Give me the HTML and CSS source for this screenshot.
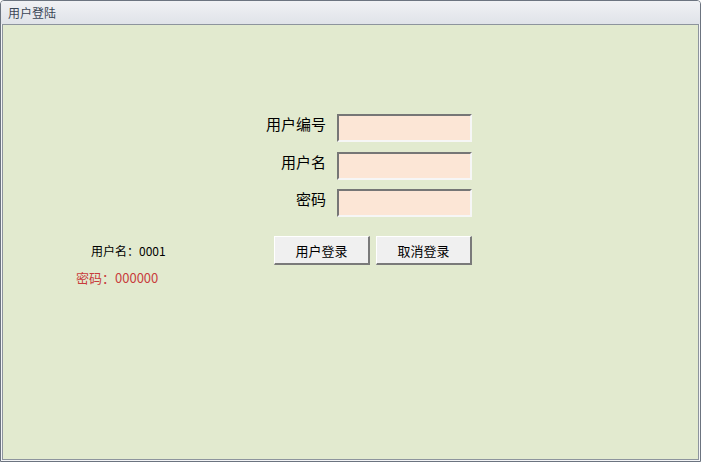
FILE: index.html
```html
<!DOCTYPE html>
<html lang="zh-CN">
<head>
    <meta charset="UTF-8">
    <title>用户登陆</title>
    <link rel="stylesheet" href="styles.css">
</head>
<body>
<div class="window">
    <div class="titlebar">用户登陆</div>
    <div class="frame">
        <div class="content">
            <div class="loginform">
                <label class="lbl">用户编号</label>
                <input class="txt" type="text">
                <label class="lbl">用户名</label>
                <input class="txt" type="text">
                <label class="lbl">密码</label>
                <input class="txt" type="password">
                <div class="hint">
                    <div class="hint-user">用户名：0001</div>
                    <div class="hint-pwd">密码：000000</div>
                </div>
                <div class="btns">
                    <button class="btn">用户登录</button>
                    <button class="btn">取消登录</button>
                </div>
            </div>
        </div>
    </div>
</div>
</body>
</html>
```

FILE: styles.css
```css
*{
    padding: 0;
    margin: 0;
    box-sizing: border-box;
}
body{
    font-family: "Noto Sans CJK SC", "Liberation Sans", sans-serif;
    background: #fff;
}
.window{
    width: 701px;
    height: 462px;
    border: 1px solid #6c7480;
    border-radius: 4px 4px 0 0;
    display: flex;
    flex-direction: column;
    overflow: hidden;
}
.titlebar{
    height: 23px;
    line-height: 23px;
    padding-left: 7px;
    font-size: 12px;
    color: #3a4656;
    background: linear-gradient(#f0f1f4, #e0e3e9);
}
.frame{
    flex: 1;
    display: flex;
    padding: 0 1px 1px 1px;
    background: #f3f4f6;
}
.content{
    flex: 1;
    border: 1px solid #8d949d;
    background: #e2eacf;
    padding-top: 89px;
}
.loginform{
    display: grid;
    grid-template-columns: 253px 81px 135px;
    grid-auto-rows: 28px;
    row-gap: 9.5px;
}
.lbl{
    grid-column: 2;
    text-align: right;
    padding-right: 11px;
    font-size: 15px;
    line-height: 20px;
    color: #000;
}
.txt{
    grid-column: 3;
    height: 28px;
    background: #fce6d6;
    border-top: 2px solid #767676;
    border-left: 2px solid #767676;
    border-right: 2px solid #f6f6f6;
    border-bottom: 2px solid #f6f6f6;
    outline: none;
}
.hint{
    grid-column: 1;
    grid-row: 4;
    padding-top: 16px;
    font-size: 12px;
}
.hint-user{
    line-height: 16px;
    padding-left: 88px;
    color: #000;
}
.hint-pwd{
    line-height: 17px;
    margin-top: 10px;
    padding-left: 73px;
    font-size: 13px;
    color: #c83c3c;
}
.btns{
    grid-column: 2 / 4;
    grid-row: 4;
    margin-top: 9.5px;
    display: flex;
    justify-content: flex-end;
    gap: 6px;
}
.btn{
    width: 96px;
    height: 29px;
    font-family: "Noto Sans CJK SC", "Liberation Sans", sans-serif;
    font-size: 13px;
    color: #000;
    background: #f0f0f0;
    border-top: 1px solid #ffffff;
    border-left: 1px solid #ffffff;
    border-right: 2px solid #7a7a7a;
    border-bottom: 2px solid #7a7a7a;
}
```
